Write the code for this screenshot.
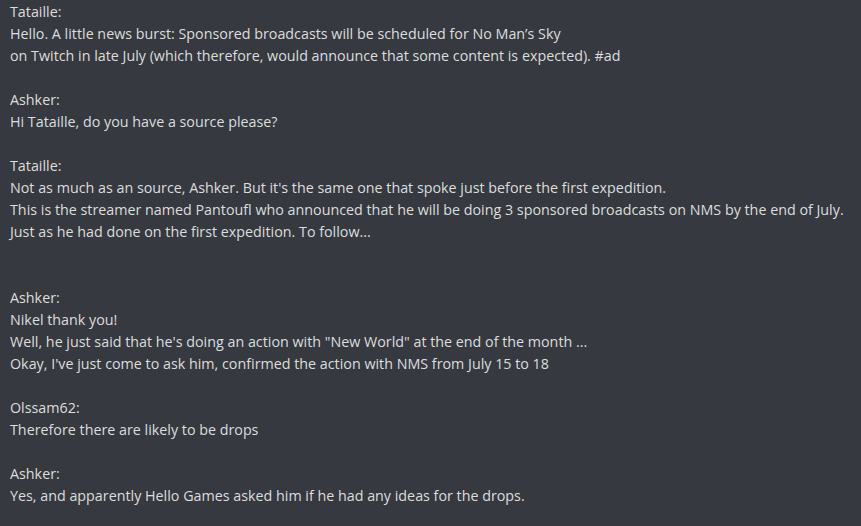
const lines: string[] = [
  'Tataille:',
  'Hello. A little news burst: Sponsored broadcasts will be scheduled for No Man\u2019s Sky',
  'on Twitch in late July (which therefore, would announce that some content is expected). #ad',
  '',
  'Ashker:',
  'Hi Tataille, do you have a source please?',
  '',
  'Tataille:',
  "Not as much as an source, Ashker. But it's the same one that spoke just before the first expedition.",
  'This is the streamer named Pantoufl who announced that he will be doing 3 sponsored broadcasts on NMS by the end of July.',
  'Just as he had done on the first expedition. To follow...',
  '',
  '',
  'Ashker:',
  'Nikel thank you!',
  'Well, he just said that he\'s doing an action with "New World" at the end of the month ...',
  "Okay, I've just come to ask him, confirmed the action with NMS from July 15 to 18",
  '',
  'Olssam62:',
  'Therefore there are likely to be drops',
  '',
  'Ashker:',
  'Yes, and apparently Hello Games asked him if he had any ideas for the drops.',
];

export default function App() {
  return (
    <div className="w-[861px] h-[526px] overflow-hidden bg-[#36393f] pt-px pl-[10px] font-['Open_Sans',sans-serif] text-[14.3px] leading-[22px] text-[#dcddde]">
      {lines.map((line, i) => (
        <div key={i} className="h-[22px] whitespace-pre">
          {line}
        </div>
      ))}
    </div>
  );
}
